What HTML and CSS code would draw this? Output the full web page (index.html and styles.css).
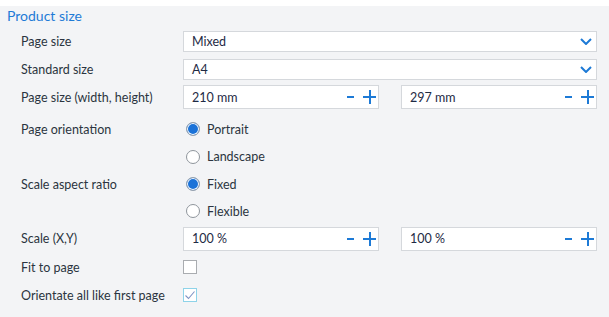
FILE: index.html
```html
<!DOCTYPE html>
<html lang="en">
<head>
    <meta charset="UTF-8">
    <meta name="viewport" content="width=device-width, initial-scale=1.0">
    <title>Product size</title>
    <link rel="stylesheet" href="styles.css">
</head>
<body>

<div class="topbar"></div>

<section class="panel">
    <h2 class="panel-title">Product size</h2>

    <div class="row">
        <label class="row-label">Page size</label>
        <div class="select">
            <span>Mixed</span>
            <svg class="chevron" width="12" height="7" viewBox="0 0 12 7"><path d="M1 1 L6 6 L11 1" fill="none" stroke="#1d7ad6" stroke-width="2"/></svg>
        </div>
    </div>

    <div class="row">
        <label class="row-label">Standard size</label>
        <div class="select">
            <span>A4</span>
            <svg class="chevron" width="12" height="7" viewBox="0 0 12 7"><path d="M1 1 L6 6 L11 1" fill="none" stroke="#1d7ad6" stroke-width="2"/></svg>
        </div>
    </div>

    <div class="row row-spin">
        <label class="row-label">Page size (width, height)</label>
        <div class="pair">
            <div class="spinner">
                <span>210 mm</span>
                <span class="minus"></span>
                <span class="plus"></span>
            </div>
            <div class="spinner">
                <span>297 mm</span>
                <span class="minus"></span>
                <span class="plus"></span>
            </div>
        </div>
    </div>

    <div class="row">
        <label class="row-label">Page orientation</label>
        <div class="radio checked">Portrait</div>
    </div>
    <div class="row row-tight">
        <label class="row-label"></label>
        <div class="radio">Landscape</div>
    </div>

    <div class="row">
        <label class="row-label">Scale aspect ratio</label>
        <div class="radio checked">Fixed</div>
    </div>
    <div class="row row-short">
        <label class="row-label"></label>
        <div class="radio">Flexible</div>
    </div>

    <div class="row row-scale">
        <label class="row-label">Scale (X,Y)</label>
        <div class="pair">
            <div class="spinner">
                <span>100 %</span>
                <span class="minus"></span>
                <span class="plus"></span>
            </div>
            <div class="spinner">
                <span>100 %</span>
                <span class="minus"></span>
                <span class="plus"></span>
            </div>
        </div>
    </div>

    <div class="row">
        <label class="row-label">Fit to page</label>
        <div class="checkbox"></div>
    </div>

    <div class="row">
        <label class="row-label">Orientate all like first page</label>
        <div class="checkbox checked">
            <svg width="12" height="12" viewBox="0 0 12 12"><path d="M1.5 6.5 L4.5 9.5 L10.5 2.5" fill="none" stroke="#7f93c4" stroke-width="1.1"/></svg>
        </div>
    </div>
</section>

</body>
</html>
```

FILE: styles.css
```css
body {
    font-family: Lato, "Liberation Sans", sans-serif;
    font-size: 12.5px;
    color: #2b3440;
    background-color: #f3f4f6;
    margin: 0;
    padding: 0;
}

.topbar {
    height: 6px;
    background-color: #fff;
}

.panel {
    display: flex;
    flex-direction: column;
    padding: 0 12px 0 7px;
}

.panel-title {
    margin: 0;
    height: 21px;
    line-height: 20px;
    font-size: 14px;
    font-weight: normal;
    color: #1f7bd6;
}

.row {
    display: flex;
    align-items: center;
    height: 28px;
}

.row-spin {
    height: 28px;
    margin-bottom: 4px;
}

.row-tight {
    height: 27px;
}

.row-short {
    height: 26px;
}

.row-scale {
    height: 29px;
}

.row-label {
    width: 176px;
    padding-left: 14px;
    box-sizing: border-box;
    flex-shrink: 0;
}

.select,
.spinner {
    display: flex;
    align-items: center;
    background-color: #fff;
    border: 1px solid #d5d8dc;
    box-sizing: border-box;
    padding: 0 8px;
    color: #1e2a44;
}

.select {
    flex: 1;
    height: 21px;
    justify-content: space-between;
    padding-right: 4px;
}

.pair {
    flex: 1;
    display: grid;
    grid-template-columns: 1fr 1fr;
    gap: 22px;
}

.spinner {
    height: 24px;
    padding-right: 2px;
}

.spinner span:first-child {
    flex: 1;
}

.minus {
    width: 7px;
    height: 2px;
    background-color: #1d7ad6;
    margin-right: 9px;
}

.plus {
    position: relative;
    width: 13px;
    height: 14px;
}

.plus::before,
.plus::after {
    content: "";
    position: absolute;
    background-color: #1d7ad6;
}

.plus::before {
    left: 0;
    right: 0;
    top: 6px;
    height: 2px;
}

.plus::after {
    top: 0;
    bottom: 0;
    left: 5.5px;
    width: 2px;
}

.radio {
    display: flex;
    align-items: center;
    gap: 7px;
    padding-left: 3px;
}

.radio::before {
    content: "";
    width: 12px;
    height: 12px;
    border-radius: 50%;
    border: 1px solid #8f959c;
    background-color: #fff;
    box-sizing: content-box;
}

.radio.checked::before {
    background-color: #1a72d8;
    box-shadow: inset 0 0 0 1px #fff;
    border-color: #9aa3ad;
}

.checkbox {
    width: 14px;
    height: 14px;
    border: 1px solid #a9acb0;
    box-sizing: border-box;
    background-color: #fff;
    display: flex;
    align-items: center;
    justify-content: center;
}

.checkbox.checked {
    border-color: #8ed3e9;
}
```
